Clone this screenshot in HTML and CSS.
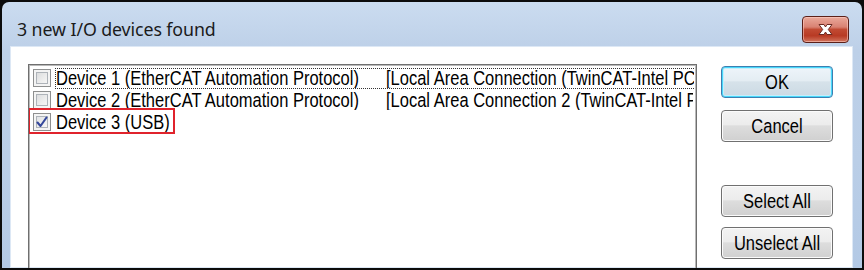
FILE: index.html
```html
<!DOCTYPE html>
<html>
<head>
<meta charset="utf-8">
<link rel="stylesheet" href="styles.css">
</head>
<body>
<div class="window">
  <div class="titlebar">
    <span class="title">3 new I/O devices found</span>
    <button class="close" aria-label="Close">
      <svg width="19" height="13" viewBox="0 0 19 13"><path d="M3 1.5 L8 1.5 L9.5 4 L11 1.5 L16 1.5 L12.3 6.5 L16 11.5 L11 11.5 L9.5 9 L8 11.5 L3 11.5 L6.7 6.5 Z" fill="#ffffff" stroke="#6b2a22" stroke-width="1" stroke-linejoin="round"/></svg>
    </button>
  </div>
  <div class="client">
    <div class="listbox">
      <div class="row">
        <span class="check"></span>
        <span class="cells focus"><span class="col1">Device 1 (EtherCAT Automation Protocol)</span><span class="col2">[Local Area Connection (TwinCAT-Intel PCI Ethernet Adapter (Gigabit) #2)]</span></span>
      </div>
      <div class="row">
        <span class="check"></span>
        <span class="cells"><span class="col1">Device 2 (EtherCAT Automation Protocol)</span><span class="col2">[Local Area Connection 2 (TwinCAT-Intel PCI Ethernet Adapter)]</span></span>
      </div>
      <div class="row">
        <span class="check checked">
          <svg width="12" height="12" viewBox="0 0 12 12"><path d="M1.5 6.5 L4.5 10 L10.5 1.5" fill="none" stroke="#34479b" stroke-width="2.1" stroke-linecap="round" stroke-linejoin="round"/></svg>
        </span>
        <span class="cells"><span class="col1">Device 3 (USB)</span></span>
      </div>
      <div class="highlight"></div>
    </div>
    <div class="buttons">
      <button class="btn default"><span class="label">OK</span></button>
      <button class="btn"><span class="label">Cancel</span></button>
      <button class="btn spaced"><span class="label">Select All</span></button>
      <button class="btn last"><span class="label">Unselect All</span></button>
    </div>
  </div>
</div>
</body>
</html>
```
FILE: styles.css
```css
html, body {
  margin: 0;
  padding: 0;
}
body {
  width: 864px;
  height: 270px;
  background: #0c0c0c;
  overflow: hidden;
  font-family: "Liberation Sans", Arial, sans-serif;
}
.window {
  margin: 2px 2px 0 2px;
  height: 266px;
  box-sizing: border-box;
  border-radius: 7px 7px 0 0;
  background: linear-gradient(180deg, #cbdcf0 0%, #bdd0e8 18%, #bacee7 60%, #b3c9e5 100%);
  padding: 0 9px 0 8px;
  display: flex;
  flex-direction: column;
}
.titlebar {
  height: 44px;
  display: flex;
  align-items: flex-start;
  justify-content: space-between;
  flex: none;
}
.title {
  font-family: "Noto Sans", "Open Sans", sans-serif;
  font-size: 17.8px;
  color: #1b1b1b;
  margin: 17px 0 0 7px;
  line-height: 20px;
  letter-spacing: -0.1px;
}
.close {
  margin: 14px 4px 0 0;
  width: 47px;
  height: 27px;
  box-sizing: border-box;
  border: 1px solid #5b2019;
  border-radius: 4px;
  background: linear-gradient(180deg, #e9a99b 0%, #d98273 40%, #c14a33 50%, #b83a24 75%, #d2765f 100%);
  box-shadow: inset 0 0 0 1px rgba(255, 210, 200, 0.55);
  padding: 0;
  display: flex;
  align-items: center;
  justify-content: center;
}
.client {
  flex: 1;
  background: #ffffff;
  display: flex;
  padding: 18px 20px 0 18px;
  box-shadow: inset 0 0 0 1px #dde8f5;
}
.listbox {
  position: relative;
  width: 669px;
  box-sizing: border-box;
  border: 1px solid #6f6f6f;
  border-bottom: none;
  box-shadow: inset 1px 1px 0 #b9b9b9, inset -1px 0 0 #b9b9b9;
  padding: 2px 2px 0 3px;
  overflow: hidden;
  flex: none;
}
.row {
  height: 22px;
  display: flex;
  align-items: center;
  font-size: 16.5px;
  color: #000;
  white-space: nowrap;
}
.check {
  width: 18px;
  height: 18px;
  box-sizing: border-box;
  border: 1px solid #8e8f8f;
  box-shadow: inset 0 0 0 2px #f4f4f4, inset 0 0 0 3px #aeb3b9;
  background-image: linear-gradient(135deg, #d4d6d8 0%, #eeeeee 60%, #fbfbfb 100%);
  flex: none;
  display: flex;
  align-items: center;
  justify-content: center;
  margin-left: 1px;
}
.check.checked {
  background-image: linear-gradient(135deg, #dcdee2 0%, #f2f2f2 70%, #ffffff 100%);
}
.cells {
  display: flex;
  margin-left: 4px;
  height: 21px;
  align-items: center;
  box-sizing: border-box;
  padding-left: 0;
  flex: 1;
  min-width: 0;
  overflow: hidden;
  border: 1px solid transparent;
}
.cells.focus {
  border: 1px dotted #333;
  border-right: none;
}
.col1, .col2 {
  display: block;
  line-height: 19px;
  transform: scaleY(1.18);
  transform-origin: 50% 55%;
}
.col1 {
  width: 330px;
  flex: none;
}
.col2 {
  flex: none;
}
.highlight {
  position: absolute;
  left: -1px;
  top: 43px;
  width: 147px;
  height: 26px;
  box-sizing: border-box;
  border: 2px solid #e0232c;
}
.buttons {
  margin-left: 24px;
  padding-top: 2px;
  display: flex;
  flex-direction: column;
  gap: 12px;
}
.btn {
  width: 112px;
  height: 32px;
  box-sizing: border-box;
  border: 1px solid #707070;
  border-radius: 4px;
  background: linear-gradient(180deg, #f3f3f3 0%, #ececec 45%, #dddddd 50%, #d0d0d0 100%);
  box-shadow: inset 0 0 0 1px #fbfbfb;
  font-family: "Liberation Sans", Arial, sans-serif;
  font-size: 16.5px;
  color: #000;
  padding: 0;
  display: flex;
  align-items: center;
  justify-content: center;
}
.label {
  display: block;
  line-height: 19px;
  transform: scaleY(1.18);
}
.btn.default {
  border-color: #3c7fb1;
  box-shadow: inset 0 0 0 1px #48d8fb, inset 0 0 0 2px #c4eefc;
  background: linear-gradient(180deg, #eef5fa 0%, #e4edf3 45%, #d6e2ea 50%, #cbd9e3 100%);
}
.btn.spaced {
  margin-top: 31px;
}
.btn.last {
  margin-top: -2px;
}
```
